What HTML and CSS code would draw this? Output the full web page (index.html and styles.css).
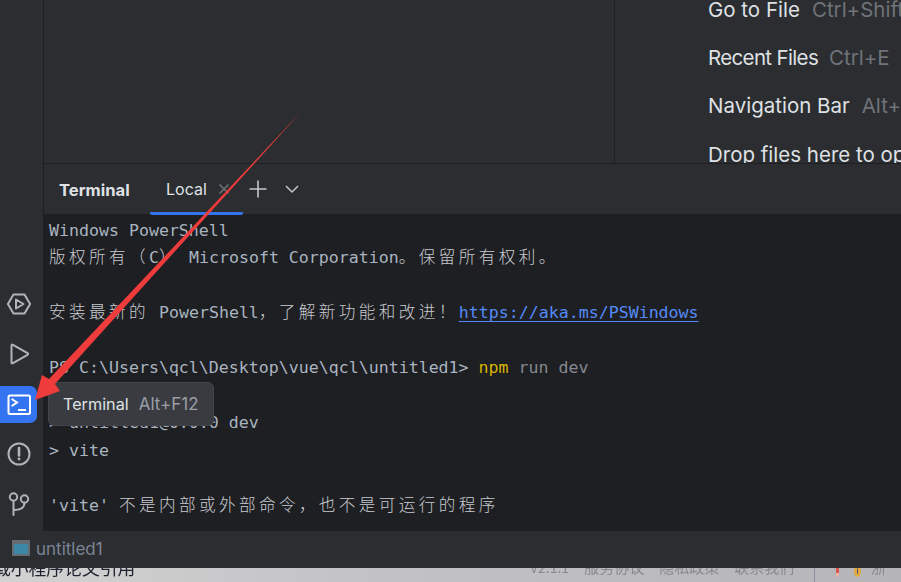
FILE: index.html
```html
<!DOCTYPE html>
<html lang="zh">
<head>
<meta charset="utf-8">
<title>Terminal</title>
<link rel="stylesheet" href="styles.css">
</head>
<body>
<div class="screen">
  <div class="workspace">
    <nav class="toolbar">
      <div class="tool">
        <svg width="26" height="24" viewBox="0 0 26 24"><path class="ic" d="M7.500 2.500h11l5.600 9.500-5.600 9.500h-11L1.900 12z"/><path class="ic" d="M10 7.500l7.500 4.500-7.500 4.500z"/></svg>
      </div>
      <div class="tool">
        <svg width="22" height="24" viewBox="0 0 22 24"><path class="ic" d="M3.500 3.500q0-1.500 1.500-.6l14.500 8.300q1.200.8 0 1.600L5 21.100q-1.500.9-1.500-.6z"/></svg>
      </div>
      <div class="tool tool-active">
        <svg width="24" height="22" viewBox="0 0 24 22"><rect class="ic-w" x="1.500" y="1.500" width="21.500" height="18.500" rx="1.500"/><path class="ic-w" d="M5.500 5.500l4.500 3-4.500 3M12 16h6"/></svg>
      </div>
      <div class="tool">
        <svg width="24" height="24" viewBox="0 0 24 24"><circle class="ic" cx="12" cy="12" r="10.500"/><path class="ic ic-thick" d="M12 6v7.500"/><circle class="dot" cx="12" cy="17" r="1.400"/></svg>
      </div>
      <div class="tool">
        <svg width="22" height="24" viewBox="0 0 22 24"><circle class="ic" cx="5.500" cy="5" r="3.700"/><circle class="ic" cx="16.500" cy="7" r="3.700"/><path class="ic" d="M5.500 8.700V23M5.500 18c6 0 11-2 11-7.300"/></svg>
      </div>
    </nav>
    <main class="content">
      <section class="editor">
        <div class="editor-left"></div>
        <div class="hints">
          <div class="hint">Go to File<span class="key">Ctrl+Shift+N</span></div>
          <div class="hint hint-tight">Recent Files<span class="key">Ctrl+E</span></div>
          <div class="hint">Navigation Bar<span class="key">Alt+Home</span></div>
          <div class="hint">Drop files here to open them</div>
        </div>
      </section>
      <header class="tabs">
        <span class="tabs-title">Terminal</span>
        <div class="tab">Local
          <svg class="tab-close" width="12" height="12" viewBox="0 0 12 12"><path d="M1.500 1.500l9 9M10.500 1.500l-9 9"/></svg>
        </div>
        <svg class="tab-add" width="18" height="18" viewBox="0 0 18 18"><path d="M9 .5v17M.5 9h17"/></svg>
        <svg class="tab-more" width="14" height="10" viewBox="0 0 14 10"><path d="M1 2l6 6 6-6"/></svg>
      </header>
      <section class="term">
        <div class="line">Windows PowerShell</div>
        <div class="line"><span class="cjk">版权所有（</span>C<span class="cjk">）</span> Microsoft Corporation<span class="cjk">。保留所有权利。</span></div>
        <div class="line"></div>
        <div class="line"><span class="cjk">安装最新的</span> PowerShell<span class="cjk">，了解新功能和改进！</span><a class="link">https://aka.ms/PSWindows</a></div>
        <div class="line"></div>
        <div class="line">PS C:\Users\qcl\Desktop\vue\qcl\untitled1&gt; <span class="cmd">npm</span> <span class="arg">run dev</span></div>
        <div class="line"></div>
        <div class="line">&gt; untitled1@0.0.0 dev</div>
        <div class="line">&gt; vite</div>
        <div class="line"></div>
        <div class="line">'vite' <span class="cjk">不是内部或外部命令，也不是可运行的程序</span></div>
      </section>
    </main>
  </div>
  <footer class="status">
    <span class="project-icon"></span>
    <span class="project-name">untitled1</span>
  </footer>
  <div class="behind">
    <span class="behind-left">载小程序论文引用</span>
    <span class="behind-link behind-version">V2.1.1</span>
    <span class="behind-link">服务协议</span>
    <span class="behind-link">隐私政策</span>
    <span class="behind-link">联系我们</span>
    <span class="behind-divider"></span>
    <span class="badge-red"></span>
    <span class="badge-gold"></span>
    <span class="behind-link">浙</span>
  </div>
  <div class="tooltip">Terminal<span class="tooltip-key">Alt+F12</span></div>
  <svg class="arrow" width="901" height="582" viewBox="0 0 901 582"><polygon points="301,112 55,384 60,391 35,400 42,375 49,379"/></svg>
</div>
</body>
</html>
```
FILE: styles.css
```css
* { box-sizing: border-box; }
html, body { margin: 0; padding: 0; }
body { width: 901px; height: 582px; overflow: hidden; background: #2b2d30; }
.screen { position: relative; width: 901px; height: 582px; overflow: hidden; display: flex; flex-direction: column; font-family: Inter, "Noto Sans", sans-serif; }

.workspace { display: flex; height: 531px; }
.toolbar { width: 44px; flex: none; background: #2b2d30; border-right: 1px solid #1e1f22; display: flex; flex-direction: column; justify-content: flex-end; padding-bottom: 2px; }
.tool { width: 37px; height: 50px; display: flex; align-items: center; justify-content: center; }
.tool-active { height: 37px; margin: 7px 0 6px; background: #3574f0; border-radius: 0 7px 7px 0; }
.ic { fill: none; stroke: #b0b3b8; stroke-width: 2; stroke-linejoin: round; stroke-linecap: round; }
.ic-thick { stroke-width: 2.600; }
.dot { fill: #b0b3b8; }
.ic-w { fill: none; stroke: #fff; stroke-width: 2; stroke-linecap: square; }

.content { flex: 1; min-width: 0; display: flex; flex-direction: column; }
.editor { height: 164px; flex: none; display: flex; background: #2b2d30; border-bottom: 1px solid #1e1f22; overflow: hidden; }
.editor-left { width: 571px; flex: none; border-right: 1px solid #1e1f22; }
.hints { flex: 1; min-width: 0; padding-left: 93px; overflow: hidden; }
.hint { height: 48.300px; display: flex; align-items: center; white-space: nowrap; color: #dfe1e5; font-size: 20.500px; }
.hint:first-child { margin-top: -15px; }
.hint-tight { letter-spacing: -.65px; }
.key { color: #6f737a; margin-left: 12px; letter-spacing: 0; }
.hint-tight .key { margin-left: 11px; }

.tabs { height: 51px; flex: none; display: flex; align-items: center; background: #2b2d30; border-bottom: 1px solid #1e1f22; padding-left: 15px; }
.tabs-title { color: #dfe1e5; font-weight: 700; font-size: 16.600px; width: 91px; padding-top: 2px; }
.tab { width: 93px; height: 100%; padding-left: 16px; display: flex; align-items: center; color: #dfe1e5; font-size: 16px; border-bottom: 3px solid #3574f0; border-radius: 0 0 2px 2px; margin-bottom: -1px; padding-top: 2px; }
.tab-close { margin-left: 11px; fill: none; stroke: #6f737a; stroke-width: 1.500; }
.tab-add { margin-left: 6px; fill: none; stroke: #c4c6cb; stroke-width: 1.600; }
.tab-more { margin-left: 18px; fill: none; stroke: #c4c6cb; stroke-width: 1.500; }

.term { flex: 1; min-height: 0; background: #1e1f22; padding: 1.500px 0 0 5px; overflow: hidden; font-family: "DejaVu Sans Mono", "Liberation Mono", "Noto Sans CJK SC", monospace; font-size: 16.600px; color: #a9b4c0; }
.line { height: 27.500px; line-height: 27.500px; white-space: pre; }
.cjk { font-family: "Noto Sans CJK SC", sans-serif; letter-spacing: 3.400px; color: #c8cad0; font-weight: 300; line-height: 1; }
.link { color: #548af7; text-decoration: underline; text-underline-offset: 3px; }
.cmd { color: #d6b400; }
.arg { color: #858890; }

.status { height: 37px; flex: none; background: #2b2d30; display: flex; align-items: center; padding-left: 12px; }
.project-icon { width: 18px; height: 16px; margin-bottom: 3px; background: #3b87a6; border: 2px solid #656b73; border-top-width: 4px; }
.project-name { margin-left: 6px; margin-bottom: 1px; color: #7b8595; font-size: 17px; }

.behind { height: 14px; flex: none; overflow: hidden; display: flex; align-items: flex-start; background: linear-gradient(90deg, #d2d2d2, #c3c3c6 40%, #b5b5b9); white-space: nowrap; }
.behind-left { width: 530px; margin-top: -11px; margin-left: -7px; color: #1f2430; font-size: 17.800px; line-height: 20px; font-family: "Noto Sans CJK SC", sans-serif; filter: blur(.5px); flex: none; }
.behind-link { margin-top: -11px; margin-right: 15px; color: #8a8a8e; font-size: 15px; line-height: 20px; font-family: "Noto Sans CJK SC", sans-serif; filter: blur(.6px); }
.behind-version { margin-left: 7px; margin-right: 15px; font-size: 14px; }
.behind-divider { width: 1px; height: 14px; background: #8d8da8; margin: 0 22px 0 5px; }
.badge-red { width: 10px; height: 9px; background: linear-gradient(#d9584a 55%, #e8b4a8 55%); border-radius: 0 0 5px 5px; margin-right: 15px; filter: blur(.6px); }
.badge-gold { width: 13px; height: 12px; margin-top: -3px; background: #45509a; border: 3px solid #dfa93e; border-radius: 50%; margin-right: 10px; filter: blur(.6px); }

.tooltip { position: absolute; left: 48px; top: 382px; width: 166px; height: 44px; background: #393b40; border: 1px solid #43454a; border-radius: 6px; display: flex; align-items: center; padding-left: 14px; color: #dfe1e5; font-size: 16.200px; }
.tooltip-key { color: #9a9ea6; margin-left: 10px; font-size: 17px; }
.arrow { position: absolute; left: 0; top: 0; pointer-events: none; }
.arrow polygon { fill: #ee3b3b; }
```
